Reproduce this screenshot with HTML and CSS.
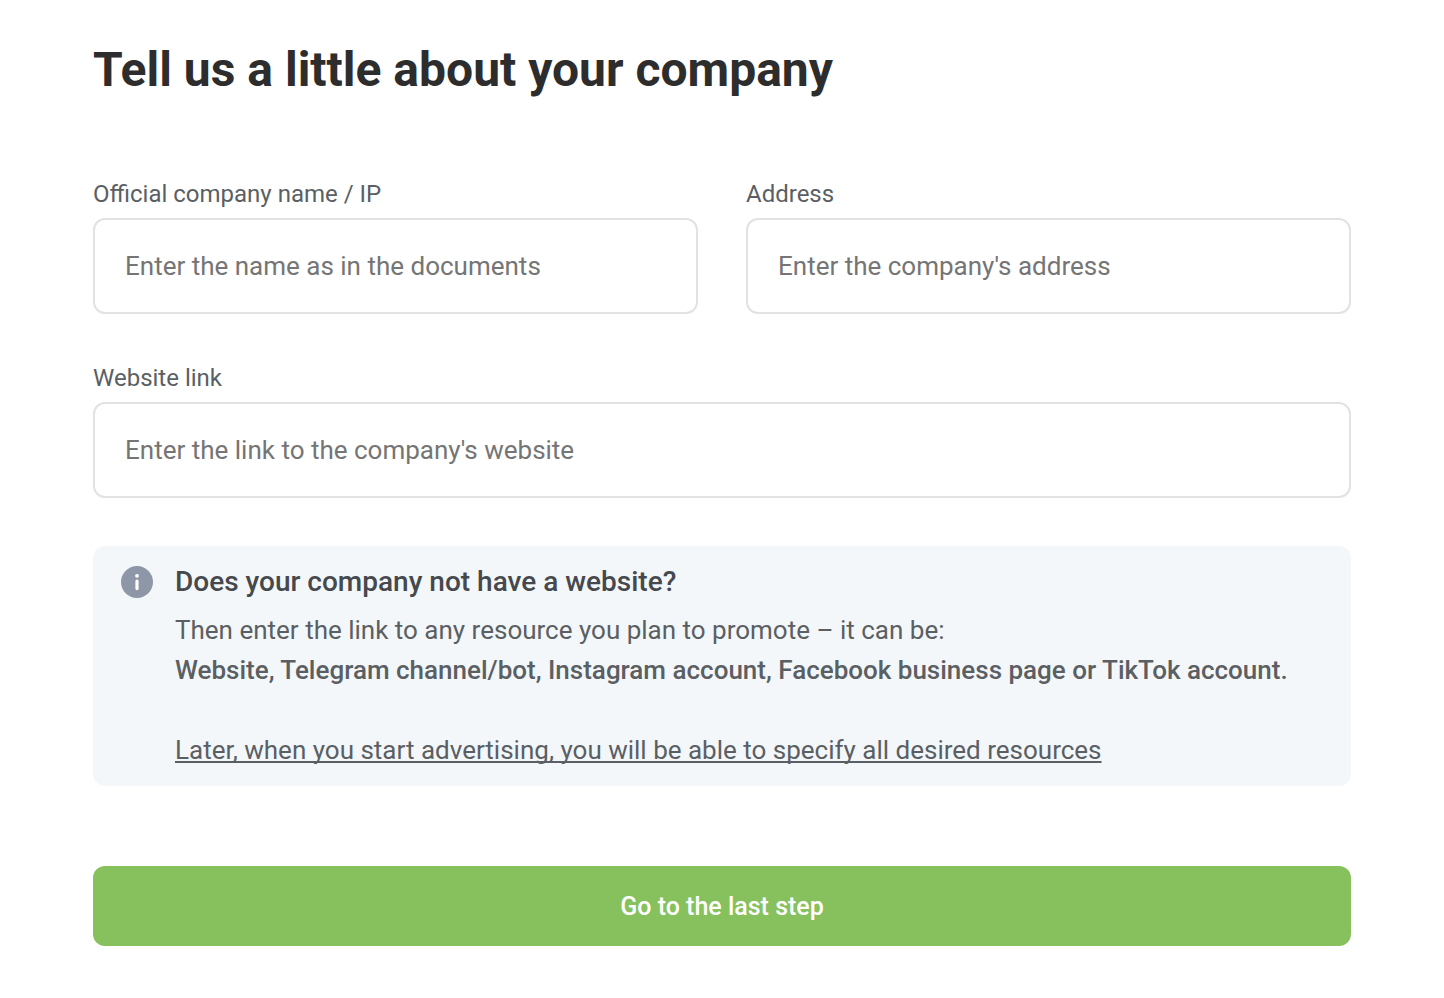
FILE: index.html
```html
<!DOCTYPE html>
<html lang="en">

<head>
    <meta charset="utf-8">
    <title>Tell us a little about your company</title>
    <link rel="stylesheet" href="styles.css">
</head>

<body>
    <main class="page">
        <h1 class="title">Tell us a little about your company</h1>
        <form class="form" action="">
            <div class="field">
                <label for="name">Official company name / IP</label>
                <input type="text" id="name" placeholder="Enter the name as in the documents" autocomplete="off">
            </div>
            <div class="field">
                <label for="address">Address</label>
                <input type="text" id="address" placeholder="Enter the company's address" autocomplete="off">
            </div>
            <div class="field wide">
                <label for="website">Website link</label>
                <input type="text" id="website" placeholder="Enter the link to the company's website" autocomplete="off">
            </div>
            <div class="info wide">
                <svg class="info-icon" viewBox="0 0 32 32" aria-hidden="true">
                    <circle cx="16" cy="16" r="16" fill="#8e97a8" />
                    <circle cx="16" cy="9.8" r="1.9" fill="#fff" />
                    <rect x="14.4" y="13.4" width="3.2" height="10.8" rx="1.6" fill="#fff" />
                </svg>
                <div>
                    <h2 class="info-title">Does your company not have a website?</h2>
                    <p>Then enter the link to any resource you plan to promote – it can be:</p>
                    <p class="strong">Website, Telegram channel/bot, Instagram account, Facebook business page or TikTok account.</p>
                    <p class="note">Later, when you start advertising, you will be able to specify all desired resources</p>
                </div>
            </div>
            <button class="submit wide" type="submit">Go to the last step</button>
        </form>
    </main>
</body>

</html>
```

FILE: styles.css
```css
body {
    margin: 0;
    background: #fff;
    color: #5a5f64;
    font-family: Roboto, "Liberation Sans", sans-serif;
}

.page {
    padding: 40px 93px 52px;
}

.title {
    margin: 0 0 78px;
    color: #2d2d2d;
    font-size: 48px;
    font-weight: 700;
    line-height: 60px;
}

.form {
    display: grid;
    grid-template-columns: 1fr 1fr;
    gap: 48px;
}

.wide {
    grid-column: 1 / -1;
}

.field {
    display: flex;
    flex-direction: column;
    gap: 8px;
}

.field label {
    font-size: 24px;
    line-height: 32px;
}

.field input {
    box-sizing: border-box;
    width: 100%;
    height: 96px;
    padding: 0 30px;
    border: 2px solid #e2e2e3;
    border-radius: 12px;
    background: #fff;
    color: #2d2d2d;
    font-family: inherit;
    font-size: 26px;
}

.field input::placeholder {
    color: #757575;
}

.info {
    display: flex;
    gap: 22px;
    padding: 16px 28px;
    border-radius: 12px;
    background: #f4f7f9;
}

.info-icon {
    flex: none;
    width: 32px;
    height: 32px;
    margin-top: 4px;
}

.info-title {
    margin: 0 0 8px;
    color: #45494d;
    font-size: 28px;
    font-weight: 500;
    line-height: 40px;
}

.info p {
    margin: 0;
    font-size: 26px;
    line-height: 40px;
}

.info .strong {
    font-weight: 500;
}

.info .note {
    margin-top: 40px;
    text-decoration: underline;
    text-decoration-skip-ink: none;
}

.submit {
    height: 80px;
    margin-top: 32px;
    border: none;
    border-radius: 12px;
    background: #86c15d;
    color: #fff;
    font-family: inherit;
    font-size: 25px;
    font-weight: 500;
    cursor: pointer;
}
```
